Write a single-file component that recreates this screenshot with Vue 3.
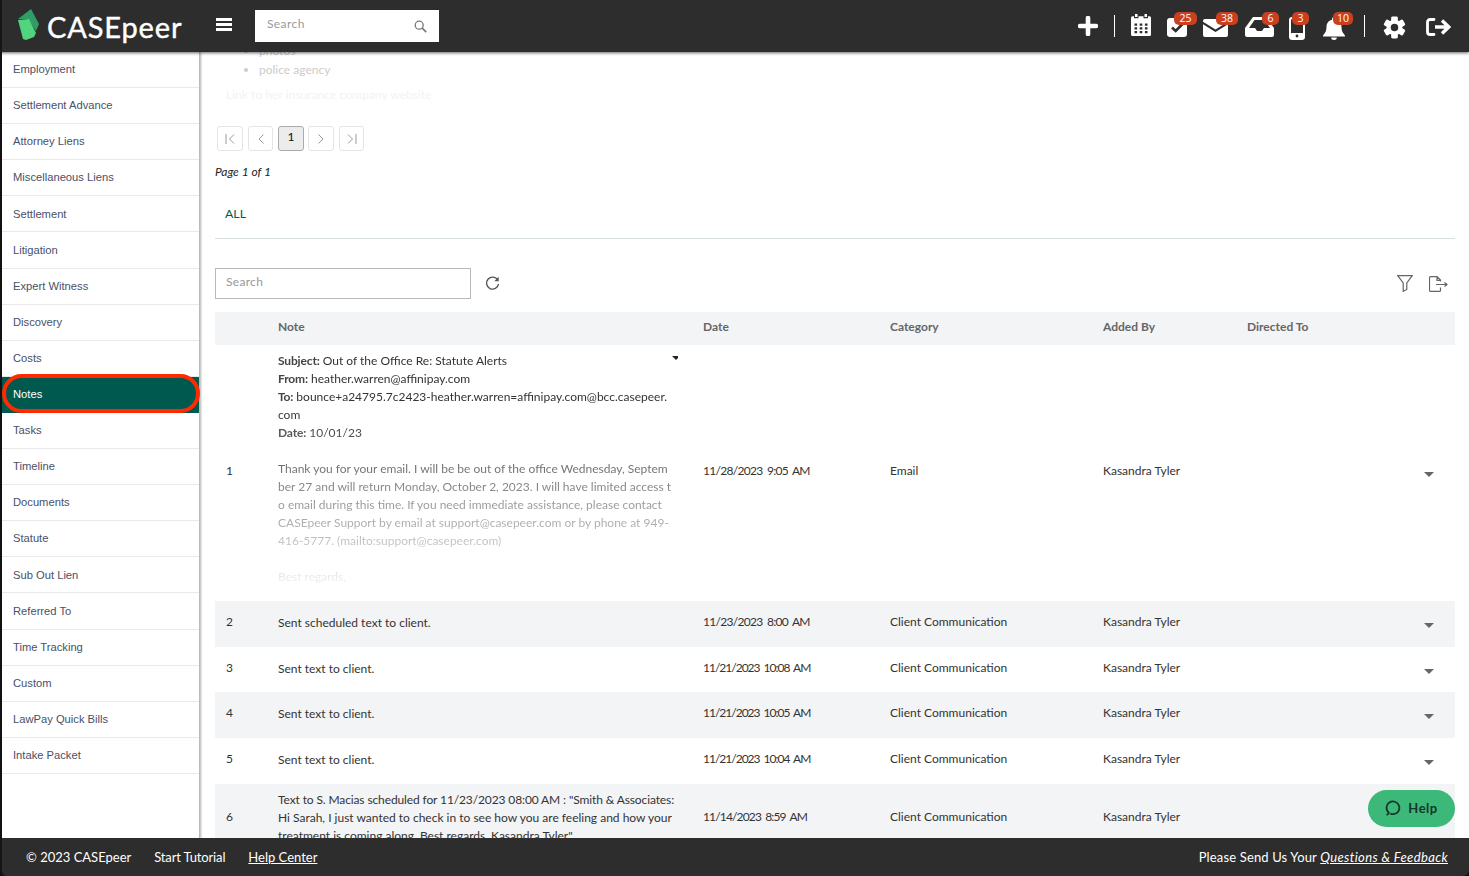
<script setup>
const sideItems = ['Employment','Settlement Advance','Attorney Liens','Miscellaneous Liens','Settlement','Litigation','Expert Witness','Discovery','Costs','Notes','Tasks','Timeline','Documents','Statute','Sub Out Lien','Referred To','Time Tracking','Custom','LawPay Quick Bills','Intake Packet']
const rows = [
  { n: 2, note: ['Sent scheduled text to client.'], date: '11/23/2023 8:00 AM', cat: 'Client Communication', h: 'r46 shade' },
  { n: 3, note: ['Sent text to client.'], date: '11/21/2023 10:08 AM', cat: 'Client Communication', h: 'r45' },
  { n: 4, note: ['Sent text to client.'], date: '11/21/2023 10:05 AM', cat: 'Client Communication', h: 'r46 shade' },
  { n: 5, note: ['Sent text to client.'], date: '11/21/2023 10:04 AM', cat: 'Client Communication', h: 'r46' },
  { n: 6, note: ['Text to S. Macias scheduled for 11/23/2023 08:00 AM : "Smith & Associates:', 'Hi Sarah, I just wanted to check in to see how you are feeling and how your', 'treatment is coming along. Best regards, Kasandra Tyler"'], date: '11/14/2023 8:59 AM', cat: 'Client Communication', h: 'r70 shade' }
]
const mailBody = ['Thank you for your email. I will be be out of the office Wednesday, Septem','ber 27 and will return Monday, October 2, 2023. I will have limited access t','o email during this time. If you need immediate assistance, please contact','CASEpeer Support by email at support@casepeer.com or by phone at 949-','416-5777. (mailto:support@casepeer.com)','\u00a0','Best regards,']
const gearTeeth = [0,60,120,180,240,300]
// The reference font has a narrow figure 1, so tighten dates by how many they hold.
const dateStyle = (d) => ({ letterSpacing: `${-(0.4 + 0.15 * d.replace(/[^1]/g, '').length)}px` })
</script>

<template>
  <div class="page">
    <header class="top">
      <div class="brand">
        <svg class="logo" width="23" height="32" viewBox="0 0 23 32">
          <polygon points="1,11 14,1 22,16 19,23 11,11" fill="#2f9e66"/>
          <polygon points="1,12 12,11 19,25 17,29 9,32 6,31" fill="#52d47f"/>
        </svg>
        <span class="brand-name">CASEpeer</span>
      </div>
      <button class="burger" aria-label="Menu"><i></i><i></i><i></i></button>
      <div class="top-search">
        <span>Search</span>
        <svg width="13" height="13" viewBox="0 0 13 13" fill="none" stroke="#777" stroke-width="1.3"><circle cx="5.2" cy="5.2" r="4"/><path d="M8.2 8.2 12.2 12.2" stroke-width="1.7"/></svg>
      </div>
      <div class="actions">
        <svg class="ic i-plus" width="20" height="20" viewBox="0 0 20 20"><path d="M10 2v16M2 10h16" stroke="#fff" stroke-width="4.6" stroke-linecap="round"/></svg>
        <span class="sep sep-a"></span>
        <svg class="ic i-cal" width="20" height="22" viewBox="0 0 20 22">
          <path fill="#fff" d="M4 0h2.500v3H4zM13.500 0H16v3h-2.500zM1.500 2.200H3v2h4.500v-2h5v2H17v-2h1.500A1.500 1.500 0 0 1 20 3.700V20.500A1.500 1.500 0 0 1 18.500 22H1.500A1.500 1.500 0 0 1 0 20.500V3.700A1.500 1.500 0 0 1 1.500 2.200Z"/>
          <path fill="#2d2d2d" d="M3.500 9.500h2.600v2.300H3.500zM8.700 9.500h2.600v2.300H8.700zM13.900 9.500h2.600v2.300h-2.600zM3.500 13.200h2.600v2.300H3.500zM8.700 13.200h2.600v2.300H8.700zM13.900 13.200h2.600v2.300h-2.600zM3.500 16.900h2.600v2.300H3.500zM8.700 16.900h2.600v2.300H8.700zM13.900 16.900h2.600v2.300h-2.600z"/>
        </svg>
        <span class="icon-wrap w-check">
          <svg width="20" height="19" viewBox="0 0 20 19"><rect width="20" height="19" rx="3" fill="#fff"/><path d="M5 9.500 8.700 13 15.500 6" fill="none" stroke="#2d2d2d" stroke-width="2.600"/></svg>
          <b class="badge">25</b>
        </span>
        <span class="icon-wrap w-mail">
          <svg width="25" height="18" viewBox="0 0 25 18"><path fill="#fff" d="M2 0h21a2 2 0 0 1 2 2v.8L12.500 10.500 0 2.800V2a2 2 0 0 1 2-2Z"/><path fill="#fff" d="M0 5.300 12.500 13 25 5.300V16a2 2 0 0 1-2 2H2a2 2 0 0 1-2-2Z"/></svg>
          <b class="badge">38</b>
        </span>
        <span class="icon-wrap w-tray">
          <svg width="29" height="20" viewBox="0 0 29 20"><path fill="#fff" d="M8 0h13l8 11v7a2 2 0 0 1-2 2H2a2 2 0 0 1-2-2v-7ZM4 11h6l2 3h5l2-3h6L19.500 3h-10Z"/></svg>
          <b class="badge">6</b>
        </span>
        <span class="icon-wrap w-phone">
          <svg width="16" height="23" viewBox="0 0 16 23"><rect x="1" y="1" width="14" height="21" rx="2.200" fill="none" stroke="#fff" stroke-width="2"/><rect x="1" y="16" width="14" height="6" rx="2" fill="#fff"/><circle cx="8" cy="19" r="1.400" fill="#2d2d2d"/></svg>
          <b class="badge">3</b>
        </span>
        <span class="icon-wrap w-bell">
          <svg width="22" height="23" viewBox="0 0 22 23"><path fill="#fff" d="M11 0a2 2 0 0 1 2 2v.7c3.700.9 5.500 3.900 5.500 7.300 0 4 1.200 5.700 3.500 8.500v1H0v-1c2.300-2.800 3.500-4.500 3.500-8.500 0-3.400 1.800-6.400 5.500-7.300V2a2 2 0 0 1 2-2Z"/><path fill="#fff" d="M8.200 20.500h5.600a2.800 2.500 0 0 1-5.600 0Z"/></svg>
          <b class="badge">10</b>
        </span>
        <span class="sep sep-b"></span>
        <svg class="ic i-gear" width="23" height="23" viewBox="0 0 24 24">
          <g fill="#fff"><rect v-for="a in gearTeeth" :key="a" x="8.500" y="0.500" width="7" height="7" rx="1.500" :transform="`rotate(${a} 12 12)`"/></g>
          <circle cx="12" cy="12" r="8.200" fill="#fff"/><circle cx="12" cy="12" r="3.900" fill="#2d2d2d"/>
        </svg>
        <svg class="ic i-out" width="25" height="18" viewBox="0 0 25 18" fill="none" stroke="#fff"><path d="M8 1.500H4A2.500 2.500 0 0 0 1.500 4v10A2.500 2.500 0 0 0 4 16.500h4" stroke-width="2.800" stroke-linecap="round"/><path d="M9 9h13M16 2.500 22.800 9 16 15.500" stroke-width="3.400"/></svg>
      </div>
    </header>

    <div class="body">
      <nav class="side">
        <a v-for="s in sideItems" :key="s" class="side-item" :class="{ active: s === 'Notes' }">{{ s }}</a>
      </nav>

      <main class="main">
        <ul class="fade-list">
          <li>photos</li>
          <li>police agency</li>
        </ul>
        <p class="fade-link">Link to her insurance company website</p>

        <div class="pager">
          <span class="pg pg-w"><svg width="11" height="10" viewBox="0 0 11 10" fill="none" stroke="#999"><path d="M1 0v10M9 .5 4.500 5 9 9.500"/></svg></span>
          <span class="pg"><svg width="6" height="10" viewBox="0 0 6 10" fill="none" stroke="#999"><path d="M5.500.5 1 5l4.500 4.500"/></svg></span>
          <span class="pg pg-w on">1</span>
          <span class="pg pg-w"><svg width="6" height="10" viewBox="0 0 6 10" fill="none" stroke="#999"><path d="M.5.500 5 5 .5 9.500"/></svg></span>
          <span class="pg"><svg width="11" height="10" viewBox="0 0 11 10" fill="none" stroke="#999"><path d="M10 0v10M2 .5 6.500 5 2 9.500"/></svg></span>
        </div>
        <p class="page-of">Page 1 of 1</p>
        <div class="tabs"><a>ALL</a></div>

        <div class="tools">
          <div class="search-box">Search</div>
          <svg class="refresh" width="15" height="15" viewBox="0 0 15 15" fill="none" stroke="#555" stroke-width="1.400"><path d="M12.800 4.200A6 6 0 1 0 13.500 8"/><path d="M13.700 .8v4.400H9.300z" fill="#555" stroke="none"/></svg>
          <span class="grow"></span>
          <svg width="16" height="17" viewBox="0 0 16 17" fill="none" stroke="#666" stroke-width="1.200"><path d="M.7.700h14.600L9.800 8v6.500L6.200 16.300V8Z"/></svg>
          <svg class="export" width="19" height="16" viewBox="0 0 19 16" fill="none" stroke="#666" stroke-width="1.200"><path d="M11.500 5.500V4L8 .6H1.500a1 1 0 0 0-1 1V14.400a1 1 0 0 0 1 1h9a1 1 0 0 0 1-1v-3M8 .6V4.400h3.500M7 8.500h11M15.500 6.500l2.500 2-2.500 2"/></svg>
        </div>

        <table class="grid">
          <colgroup>
            <col class="c1"><col class="c2"><col class="c3"><col class="c4"><col class="c5"><col class="c6"><col class="c7">
          </colgroup>
          <thead>
            <tr class="r33"><th></th><th>Note</th><th>Date</th><th>Category</th><th>Added By</th><th>Directed To</th><th></th></tr>
          </thead>
          <tbody>
            <tr class="r256">
              <td>1</td>
              <td class="note-cell">
                <div class="mail">
                  <span class="mail-caret"></span>
                  <div><b>Subject:</b> Out of the Office Re: Statute Alerts</div>
                  <div><b>From:</b> heather.warren@affinipay.com</div>
                  <div><b>To:</b> bounce+a24795.7c2423-heather.warren=affinipay.com@bcc.casepeer.</div>
                  <div>com</div>
                  <div><b>Date:</b> 10/01/23</div>
                  <div>&nbsp;</div>
                  <div v-for="(l, i) in mailBody" :key="i">{{ l }}</div>
                </div>
              </td>
              <td class="date" :style="dateStyle('11/28/2023 9:05 AM')">11/28/2023 9:05 AM</td>
              <td>Email</td>
              <td>Kasandra Tyler</td>
              <td></td>
              <td><span class="caret"></span></td>
            </tr>
            <tr v-for="r in rows" :key="r.n" :class="r.h">
              <td>{{ r.n }}</td>
              <td class="note-cell"><div v-for="l in r.note" :key="l" :class="{ tight: /\d{4}/.test(l) }">{{ l }}</div></td>
              <td class="date" :style="dateStyle(r.date)">{{ r.date }}</td>
              <td>{{ r.cat }}</td>
              <td>Kasandra Tyler</td>
              <td></td>
              <td><span class="caret"></span></td>
            </tr>
          </tbody>
        </table>

        <button class="help">
          <svg width="16" height="16" viewBox="0 0 16 16" fill="none" stroke="#16352a" stroke-width="1.800"><path d="M1.500 15c1.300-.4 2-1.200 2.300-2.300A6.400 6.400 0 1 1 8.300 14.200c-1 0-2.200-.2-3-.7"/></svg>
          Help
        </button>
      </main>
    </div>

    <footer class="foot">
      <span>© 2023 CASEpeer</span>
      <a class="tut">Start Tutorial</a>
      <a class="uline">Help Center</a>
      <span class="grow"></span>
      <span class="send">Please Send Us Your <a class="uline it">Questions &amp; Feedback</a></span>
    </footer>
  </div>
</template>

<style>
html, body { margin: 0; background: #fff; overflow: hidden; }
</style>

<style scoped>
.page { height: 876px; display: flex; flex-direction: column; overflow: hidden; font-family: Lato, "Open Sans", sans-serif; color: #333; font-size: 12px; background: #111; }
.top { height: 52px; flex: none; background: #2d2d2d; display: flex; align-items: center; position: relative; z-index: 3; box-shadow: 0 1px 3px rgba(0,0,0,.6); border-left: 2px solid #161616; box-sizing: border-box; }
.brand { width: 214px; display: flex; align-items: center; flex: none; }
.logo { margin-left: 15px; margin-top: -5px; flex: none; }
.brand-name { margin-left: 7px; color: #fff; font-size: 29px; letter-spacing: .85px; line-height: 1; font-weight: 400; margin-top: 1px; -webkit-text-stroke: .4px #fff; }
.burger { background: none; border: 0; padding: 0; width: 16px; display: flex; flex-direction: column; gap: 2px; margin-top: -3px; }
.burger i { height: 3px; background: #fff; display: block; }
.top-search { margin-left: 23px; width: 184px; height: 32px; background: #fff; display: flex; align-items: center; justify-content: space-between; padding: 0 12px 6px; box-sizing: border-box; color: #999; font-size: 12px; letter-spacing: .4px; flex: none; }
.top-search svg { margin-top: 6px; }
.actions { margin-left: auto; margin-right: 18px; display: flex; align-items: center; gap: 16px; }
.ic { display: block; flex: none; }
.sep { width: 1px; height: 22px; background: #fff; flex: none; }
.icon-wrap { position: relative; display: block; flex: none; }
.icon-wrap svg { display: block; }
.badge { position: absolute; top: -6px; background: #c9401f; color: #fff; height: 13px; border-radius: 5px; font-size: 10.500px; font-weight: 400; line-height: 13px; text-align: center; font-family: "Open Sans", sans-serif; }
.i-plus { margin-top: -1px; }
.i-cal { margin-top: -2px; }
.w-check { margin-top: 3px; }
.w-check .badge { left: 7px; width: 23px; }
.w-mail { margin-top: 4px; }
.w-mail .badge { left: 13px; width: 22px; top: -7px; }
.w-tray { margin-left: 1px; margin-top: 2px; }
.w-tray .badge { left: 17px; width: 17px; top: -5px; }
.w-phone { margin-left: -1px; margin-top: 5px; }
.w-phone .badge { left: 3px; width: 17px; top: -5px; }
.w-bell { margin-left: 2px; margin-top: 5px; }
.w-bell .badge { left: 10px; width: 20px; top: -5px; }
.sep-b { margin-left: 3px; }
.i-gear { margin: 2px 0 0 2px; }
.i-out { margin: 2px 0 0 4px; }

.body { flex: 1; min-height: 0; display: flex; background: #fff; }
.side { width: 200px; flex: none; box-sizing: border-box; border-left: 2px solid #111; border-right: 1px solid #bbb; box-shadow: 1px 0 2px rgba(0,0,0,.3); position: relative; z-index: 2; background: #fff; font-family: "Liberation Sans", Arial, sans-serif; }
.side-item { display: flex; align-items: center; height: 36.100px; box-sizing: border-box; padding: 0 0 .7px 11px; font-size: 11.200px; color: #4a5068; border-bottom: 1px solid #e9e9e9; position: relative; }
.side-item.active { background: #00594f; color: #fff; border-bottom-color: #00594f; }
.side-item.active::after { content: ""; position: absolute; left: 0; right: -1px; top: -3px; bottom: -1px; border: 4px solid #ff2a00; border-radius: 20px; box-sizing: border-box; }
.main { flex: 1; min-width: 0; height: 786px; overflow: hidden; position: relative; padding: 0 14px 0 15px; box-sizing: border-box; }
.fade-list { margin: -11px 0 0 0; padding: 0 0 0 44px; font-size: 12px; line-height: 19px; color: #ccc; }
.fade-link { margin: 7px 0 0 11px; font-size: 12.100px; line-height: 18px; color: #f1f3f5; }
.pager { margin: 22px 0 0 2px; display: flex; gap: 5px; }
.pg { width: 25px; height: 25px; box-sizing: border-box; border: 1px solid #e4e4e4; border-radius: 3px; display: flex; align-items: center; justify-content: center; color: #111; font-size: 12px; }
.pg-w { width: 26px; }
.pg.on { background: #ececec; border-color: #aaa; padding-bottom: 4px; margin-right: -1px; }
.page-of { margin: 13px 0 0; font-style: italic; font-size: 12px; line-height: 16px; color: #222; }
.tabs { margin-top: 26px; padding: 0 0 16px 10px; border-bottom: 1px solid #d9e0e4; line-height: 16px; color: #00594f; font-size: 12.300px; }
.tools { display: flex; align-items: center; margin-top: 29px; height: 31px; }
.search-box { width: 256px; height: 31px; box-sizing: border-box; border: 1px solid #b9b9b9; padding: 0 10px 4px; display: flex; align-items: center; color: #999; font-size: 12px; letter-spacing: .3px; }
.refresh { margin-left: 14px; }
.grow { flex: 1; }
.export { margin: 0 7px 0 16px; }
.grid { margin-top: 13px; width: 1240px; table-layout: fixed; border-collapse: collapse; font-size: 12px; color: #333; }
.c1 { width: 63px; } .c2 { width: 425px; } .c3 { width: 187px; } .c4 { width: 213px; } .c5 { width: 144px; } .c6 { width: 175px; } .c7 { width: 33px; }
.r33 { height: 33px; }
th { padding: 0 0 5px; text-align: left; background: #f3f4f6; font-weight: 700; color: #666; font-size: 12px; }
td { padding: 0 0 5px; vertical-align: middle; }
td:first-child { padding-left: 11px; }
td.note-cell { padding-bottom: 2px; }
td:last-child { padding-bottom: 0; }
td.date { word-spacing: 2px; }
.r256 { height: 256px; }
.r46 { height: 46px; }
.r45 { height: 45px; }
.r70 { height: 70px; }
.shade td { background: #f3f4f6; }
.note-cell { line-height: 18px; white-space: nowrap; }
.tight { letter-spacing: -.12px; }
.mail { position: relative; width: 400px; margin-bottom: 6px; -webkit-mask-image: linear-gradient(#000 25%, rgba(0,0,0,.06) 100%); mask-image: linear-gradient(#000 25%, rgba(0,0,0,.06) 100%); }
.mail b { font-weight: 700; color: #444; letter-spacing: -.15px; }
.mail-caret { position: absolute; left: 394px; top: 4px; border: 4.500px solid transparent; border-top: 4.500px solid #222; border-bottom: 0; }
.caret { display: block; width: 0; height: 0; margin: 3px 0 0 2px; border-left: 5.500px solid transparent; border-right: 5.500px solid transparent; border-top: 5.500px solid #666; }
.help { position: absolute; right: 14px; top: 738px; width: 87px; height: 37px; border: 0; border-radius: 19px; background: #3cb878; color: #16352a; display: flex; align-items: center; justify-content: center; gap: 7px; font: 700 13px Lato, sans-serif; letter-spacing: .5px; padding: 0 0 1px; }
.foot { height: 38px; flex: none; background: #2d2d2d; color: #fff; display: flex; align-items: center; font-size: 13px; padding: 0 21px 0 24px; position: relative; z-index: 3; border-left: 2px solid #161616; border-radius: 0 0 6px 6px; }
.tut { margin: 0 23px; letter-spacing: -.15px; }
.uline { text-decoration: underline; }
.it { font-style: italic; letter-spacing: .38px; }
.send { letter-spacing: .15px; }
</style>
